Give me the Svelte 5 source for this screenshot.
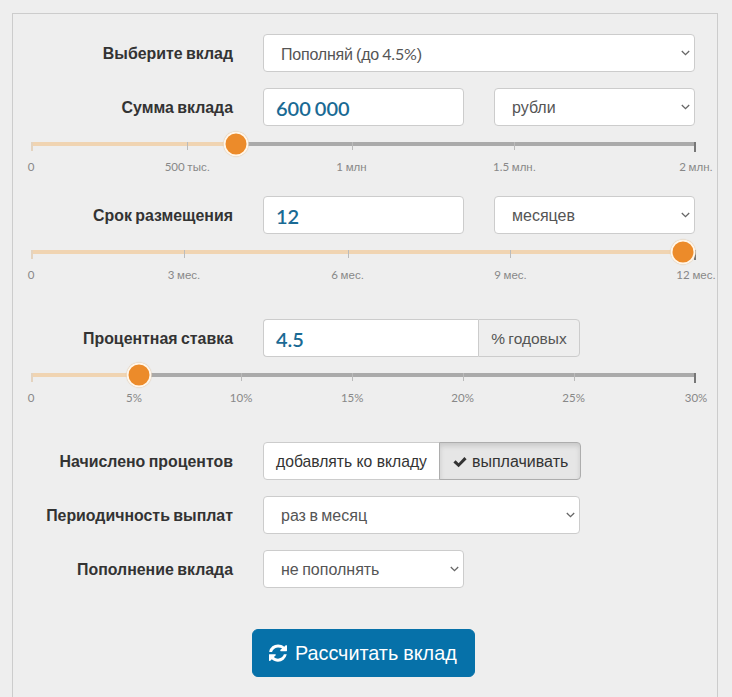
<script>
  const thumbSize = 25;
  const parts = (t) => t.split(/(\d[\d.]*%?)/).filter(Boolean);
  const isNum = (p) => /^\d/.test(p);
  const sliders = {
    sum: {
      pos: 30.77,
      ticks: [
        { at: 0, t: '0' },
        { at: 23.5, t: '500 тыс.' },
        { at: 48.2, t: '1 млн' },
        { at: 72.7, t: '1.5 млн.' },
        { at: 100, t: '2 млн.' }
      ]
    },
    term: {
      pos: 98.1,
      ticks: [
        { at: 0, t: '0' },
        { at: 23.0, t: '3 мес.' },
        { at: 47.6, t: '6 мес.' },
        { at: 72.1, t: '9 мес.' },
        { at: 100, t: '12 мес.' }
      ]
    },
    rate: {
      pos: 16.3,
      ticks: [
        { at: 0, t: '0' },
        { at: 15.5, t: '5%' },
        { at: 31.6, t: '10%' },
        { at: 48.3, t: '15%' },
        { at: 64.9, t: '20%' },
        { at: 81.6, t: '25%' },
        { at: 100, t: '30%' }
      ]
    }
  };
</script>

{#snippet mixed(t)}
  {#each parts(t) as p}{#if isNum(p)}<span class="num">{p}</span>{:else}{p}{/if}{/each}
{/snippet}

{#snippet slider(s)}
  <div class="slider">
    <div class="rail">
      <div class="track"></div>
      <div class="fill" style="width:{s.pos}%"></div>
      {#each s.ticks as tick}
        <i class="tick" class:end={tick.at === 100} class:start={tick.at === 0} style="left:{tick.at}%"></i>
      {/each}
      <div class="thumb" style="left:{s.pos}%;width:{thumbSize}px;height:{thumbSize}px"></div>
    </div>
    <div class="scale">
      {#each s.ticks as tick}
        <span class="mark" style="left:{tick.at}%">{@render mixed(tick.t)}</span>
      {/each}
    </div>
  </div>
{/snippet}

{#snippet chevron()}
  <svg class="chev" width="9" height="6" viewBox="0 0 9 6"><path d="M.8 1l3.700 3.700L8.200 1" fill="none" stroke="#666" stroke-width="1.300"/></svg>
{/snippet}

<div class="panel">
  <div class="row first">
    <div class="label">Выберите вклад</div>
    <div class="select full"><span class="tight">{@render mixed('Пополняй (до 4.5%)')}</span>{@render chevron()}</div>
  </div>

  <div class="row">
    <div class="label">Сумма вклада</div>
    <div class="input half">600 000</div>
    <div class="select half">рубли{@render chevron()}</div>
  </div>
  {@render slider(sliders.sum)}

  <div class="row gap-a">
    <div class="label">Срок размещения</div>
    <div class="input half">12</div>
    <div class="select half">месяцев{@render chevron()}</div>
  </div>
  {@render slider(sliders.term)}

  <div class="row gap-b joined-row">
    <div class="label">Процентная ставка</div>
    <div class="input joined">4.5</div>
    <div class="addon"><span>{@render mixed('% годовых')}</span></div>
  </div>
  {@render slider(sliders.rate)}

  <div class="row gap-b">
    <div class="label">Начислено процентов</div>
    <div class="group">
      <div class="opt">добавлять ко вкладу</div>
      <div class="opt on">
        <svg width="14" height="12" viewBox="0 0 14 12"><path d="M.4 6.400l2.200-2.200 3 3L11.400 1l2.200 2.200L5.600 11.200z" fill="#333"/></svg>
        выплачивать
      </div>
    </div>
  </div>

  <div class="row">
    <div class="label">Периодичность выплат</div>
    <div class="select wide">раз в месяц{@render chevron()}</div>
  </div>

  <div class="row">
    <div class="label">Пополнение вклада</div>
    <div class="select half">не пополнять{@render chevron()}</div>
  </div>

  <button class="calc" type="button">
    <svg width="18" height="18" viewBox="0 0 1536 1536"><path fill="#fff" d="M1511 896q0 5-1 7-64 268-268 434.500T764 1504q-146 0-282.500-55T238 1292l-129 129q-19 19-45 19t-45-19-19-45V928q0-26 19-45t45-19h448q26 0 45 19t19 45-19 45L420 1110q71 66 161 102t187 36q134 0 250-65t186-179q11-17 53-117 8-23 30-23h192q13 0 22.500 9.500t9.500 22.500zm25-800v448q0 26-19 45t-45 19h-448q-26 0-45-19t-19-45 19-45l138-138Q969 288 768 288q-134 0-250 65T332 532q-11 17-53 117-8 23-30 23H50q-13 0-22.500-9.500T18 640v-7q65-268 270-434.500T768 32q146 0 284 55.500T1297 244l130-129q19-19 45-19t45 19 19 45z"/></svg>
    Рассчитать вклад
  </button>
</div>

<style>
  :global(body) {
    margin: 0;
    background: #eee;
    font-family: "Liberation Sans", Arial, sans-serif;
    color: #333;
    overflow: hidden;
  }
  .panel {
    box-sizing: border-box;
    width: 706px;
    height: 684px;
    margin: 13px 0 0 12px;
    padding: 20px 21px 0 18px;
    border: 1px solid #ccc;
    border-bottom: 0;
  }
  .row {
    display: flex;
    align-items: center;
    gap: 30px;
    margin-top: 16px;
  }
  .row.first { margin-top: 0; }
  .row.gap-a { margin-top: 23px; }
  .row.gap-b { margin-top: 38px; }
  .row.joined-row { gap: 0; }
  .joined-row .label { margin-right: 30px; }
  .label {
    flex: none;
    width: 202px;
    padding-top: 2px;
    text-align: right;
    font-size: 15.900px;
    word-spacing: -1px;
    font-weight: bold;
    color: #333;
  }
  .select, .input, .opt, .addon {
    box-sizing: border-box;
    height: 38px;
    padding-top: 2px;
    display: flex;
    align-items: center;
    border: 1px solid #ccc;
    background: #fff;
    font-size: 16px;
  }
  .select {
    position: relative;
    padding-left: 17px;
    border-radius: 4px;
    color: #555;
    word-spacing: -1px;
  }
  .tight { letter-spacing: -0.2px; }
  .chev { position: absolute; right: 4px; top: 15px; }
  .full { width: 432px; }
  .half { width: 201px; }
  .wide { width: 317px; }
  .input {
    padding-left: 12px;
    border-radius: 4px;
    font-family: Lato, sans-serif;
    font-size: 20px;
    font-weight: 600;
    word-spacing: -1px;
    color: #1a6a94;
  }
  .joined {
    width: 215px;
    border-radius: 4px 0 0 4px;
    border-right: 0;
  }
  .addon {
    width: 102px;
    justify-content: center;
    background: #eee;
    color: #555;
    font-size: 15.500px;
    word-spacing: -1px;
    border-radius: 0 4px 4px 0;
  }
  .group { display: flex; }
  .opt {
    padding-left: 12px;
    padding-right: 12px;
    color: #333;
    font-size: 15.700px;
    border-radius: 4px 0 0 4px;
  }
  .opt.on {
    gap: 5px;
    margin-left: -1px;
    font-size: 16px;
    background: #e6e6e6;
    border-color: #adadad;
    border-radius: 0 4px 4px 0;
    box-shadow: inset 0 3px 5px rgba(0, 0, 0, 0.125);
    padding-left: 13px;
    padding-right: 12px;
  }
  .slider { padding-top: 16px; }
  .rail { position: relative; height: 4px; }
  .track, .fill {
    position: absolute;
    left: 0;
    top: 0;
    height: 4px;
  }
  .track { width: 100%; background: #aaa; }
  .fill { background: #f0d4b2; }
  .tick {
    position: absolute;
    top: 0;
    width: 1px;
    height: 8px;
    background: #bbb;
  }
  .tick.start { background: #e4d3bf; width: 2px; height: 9px; }
  .tick.end { background: #777; width: 2px; height: 10px; margin-left: -2px; }
  .thumb {
    position: absolute;
    top: 2px;
    box-sizing: border-box;
    transform: translate(-50%, -50%);
    background: #ec8b2a;
    border: 2px solid #fff6ea;
    border-radius: 50%;
    box-shadow: 0 0 1px 0 #c9a77f;
  }
  .scale { position: relative; height: 13px; margin-top: 14px; }
  .mark {
    position: absolute;
    top: 0;
    transform: translateX(-50%);
    white-space: nowrap;
    font-size: 11.500px;
    line-height: 14px;
    word-spacing: -0.5px;
    color: #888;
  }
  .num { font-family: Lato, "Liberation Sans", sans-serif; }
  .calc {
    display: flex;
    align-items: center;
    gap: 8px;
    box-sizing: border-box;
    width: 223px;
    height: 48px;
    margin: 41px 0 0 221px;
    padding: 0 0 0 16px;
    background: #0671a9;
    border: 1px solid #0671a9;
    border-radius: 6px;
    color: #fff;
    font-family: "Liberation Sans", sans-serif;
    font-size: 19.800px;
    word-spacing: -0.5px;
  }
</style>
